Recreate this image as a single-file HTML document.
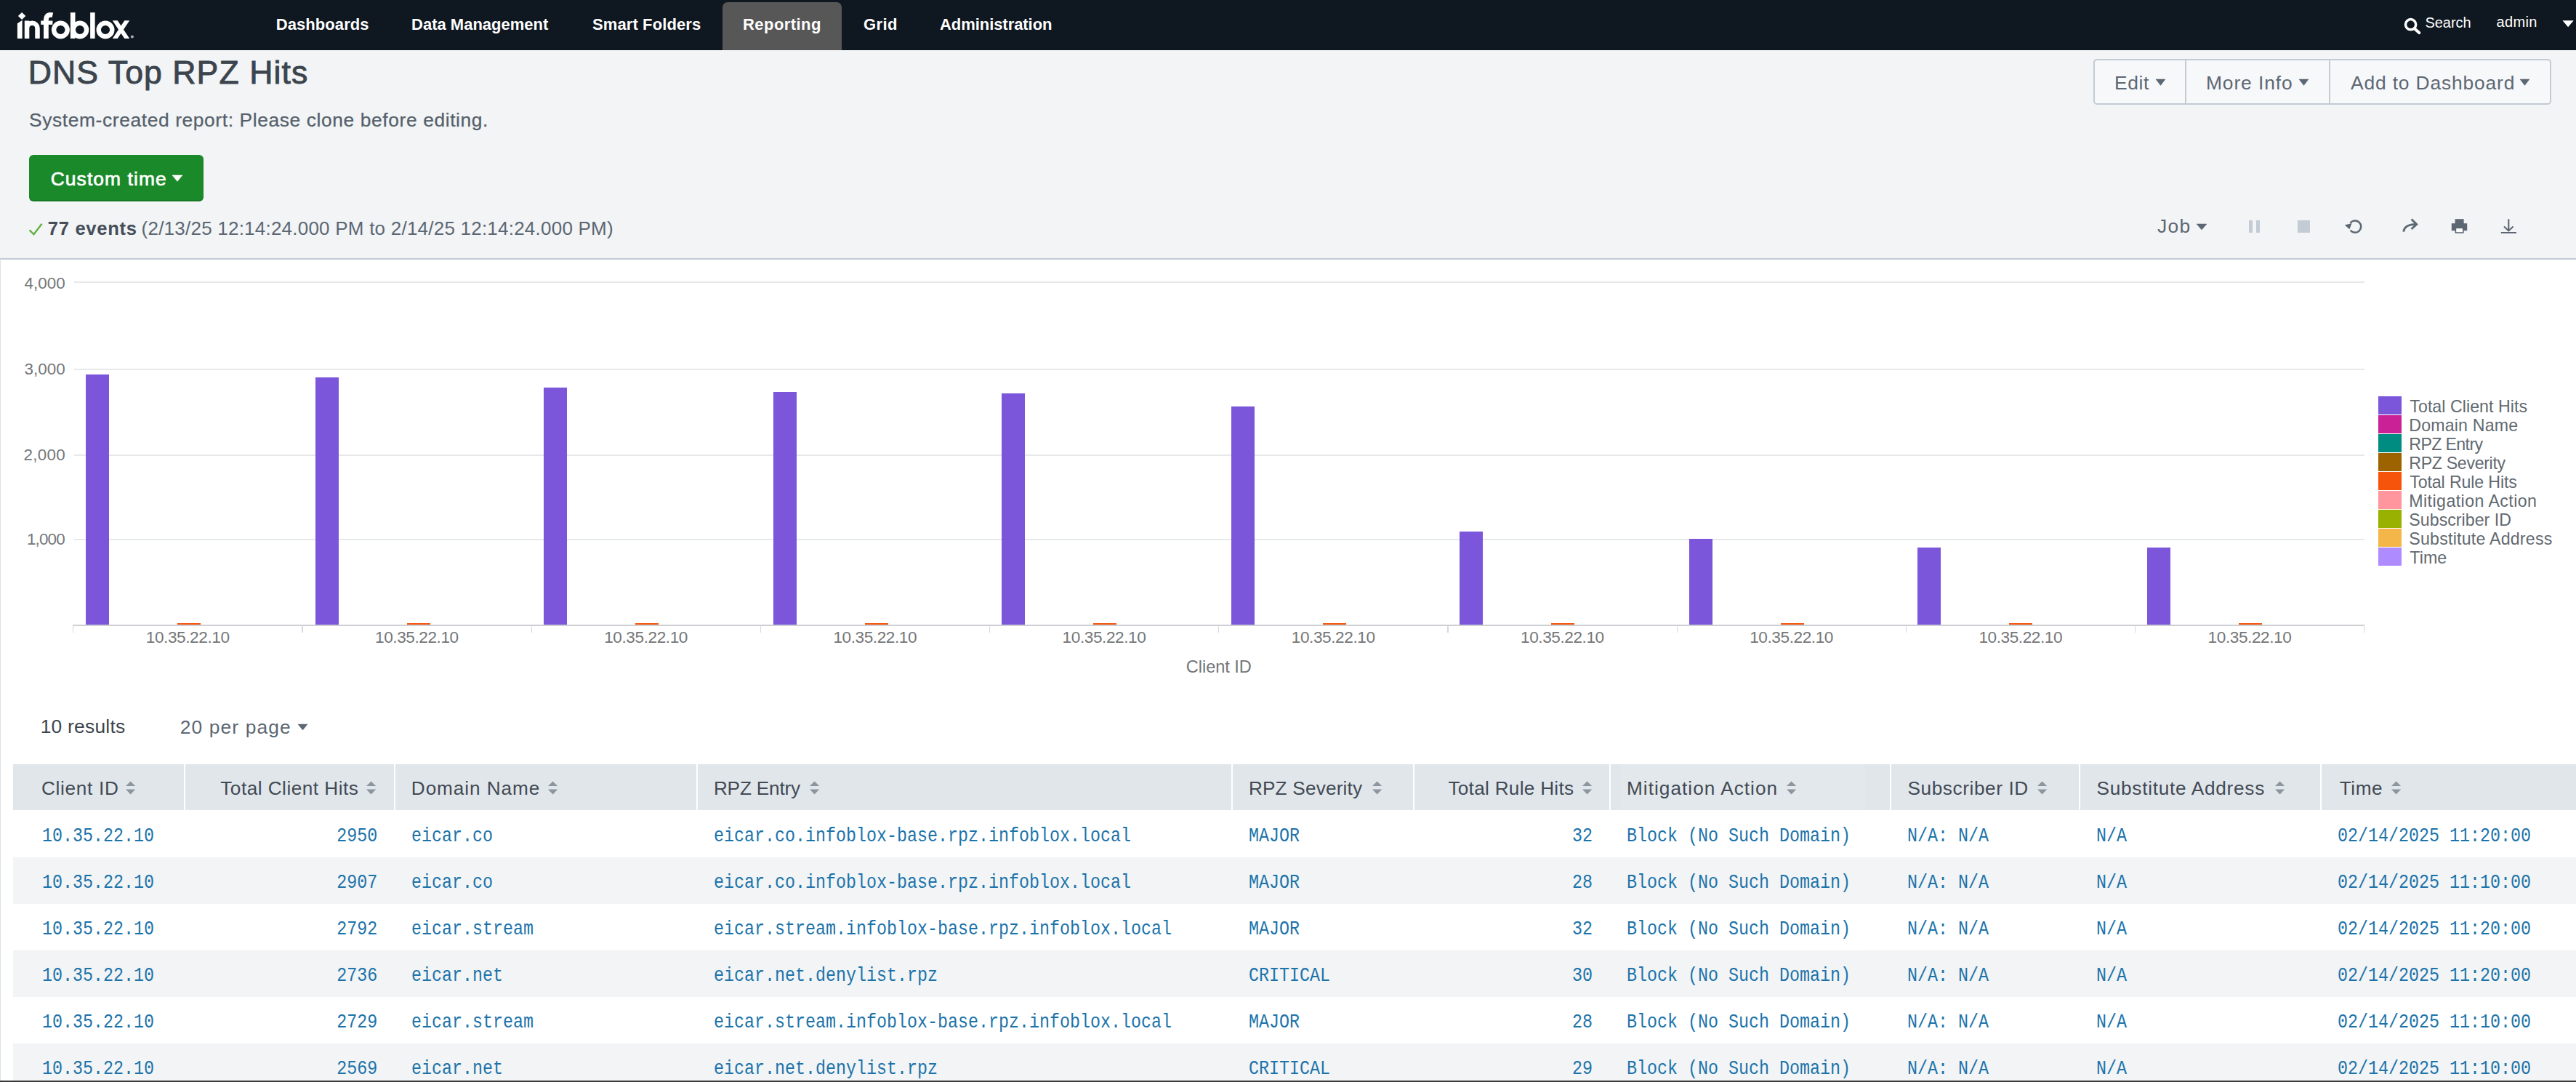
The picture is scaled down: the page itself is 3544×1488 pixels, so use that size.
<!DOCTYPE html>
<html><head><meta charset="utf-8"><title>DNS Top RPZ Hits</title>
<style>
html,body{margin:0;padding:0}
body{width:3544px;height:1488px;overflow:hidden;position:relative;background:#f2f4f5;font-family:"Liberation Sans",sans-serif}
.t{position:absolute;white-space:pre;line-height:1}
.a{position:absolute}
.m{position:absolute;white-space:pre;line-height:1;font-family:"Liberation Mono",monospace;font-size:27.6px;color:#1c73aa;transform:scaleX(.8454);transform-origin:0 0}
.m.r{transform-origin:100% 0}
svg{position:absolute;overflow:visible}
</style></head><body>

<div class="a" style="left:0;top:0;width:3544px;height:68.6px;background:#0f1720"></div>
<div class="a" style="left:994px;top:3px;width:164px;height:65.6px;background:#575757;border-radius:7px 7px 0 0"></div>
<svg style="left:0;top:0" width="210" height="68" viewBox="0 0 210 68" fill="none" stroke="#fff" stroke-width="6.6">
<polygon points="30.1,16.9 35.3,22 30.1,27.1 24.9,22" fill="#fff" stroke="none"/>
<polygon points="23.9,32.3 30.6,27.7 30.6,53 23.9,53" fill="#fff" stroke="none"/>
<path d="M37.05 53V28.4M37.05 38.9a7.225 7.225 0 0 1 14.45 0V53" stroke-width="6.5"/>
<path d="M72.4 20.8Q63.4 18.6 63.4 28V53" stroke-width="6.8"/><path d="M56.2 31.2H72.4" stroke-width="5.4"/>
<circle cx="83.4" cy="41" r="9.3" stroke-width="6.4"/>
<path d="M100.2 17.2V53"/><circle cx="109.9" cy="41" r="9.2" stroke-width="6.4"/>
<path d="M127.4 17.2V53" stroke-width="6.5"/>
<circle cx="145" cy="41" r="9.3" stroke-width="6.4"/>
<polygon points="154.8,28.2 161.7,28.2 178.2,53 171.3,53" fill="#fff" stroke="none"/><polygon points="171.3,28.2 178.2,28.2 161.7,53 154.8,53" fill="#fff" stroke="none"/>
<circle cx="181.9" cy="50.5" r="2.1" fill="#a9adb3" stroke="none"/>
</svg>
<svg style="left:3300px;top:18px" width="40" height="36" viewBox="3300 18 40 36"><circle cx="3316.6" cy="33.7" r="7.1" fill="none" stroke="#fff" stroke-width="3.5"/><path d="M3321.8 39.3L3328.2 45" stroke="#fff" stroke-width="4.2" stroke-linecap="round"/></svg>
<svg style="left:3520px;top:24px" width="24" height="18" viewBox="3520 24 24 18"><polygon points="3525.5,28.3 3540.7,28.3 3533.1,37.2" fill="#fff"/></svg>
<div class="a" style="left:2880.4px;top:81.3px;width:630px;height:62.8px;border:2px solid #c3cbd4;border-radius:5px;background:#f7f8fa;box-sizing:border-box"></div>
<div class="a" style="left:3006px;top:83.3px;width:2px;height:58.8px;background:#c3cbd4"></div>
<div class="a" style="left:3204px;top:83.3px;width:2px;height:58.8px;background:#c3cbd4"></div>
<svg style="left:2963.5px;top:106.8px" width="17.0" height="12.400000000000006" viewBox="2963.5 106.8 17.0 12.400000000000006"><polygon points="2965.5,108.8 2978.5,108.8 2972.0,117.2" fill="#5c6773" stroke="#5c6773" stroke-width=".5" stroke-linejoin="round"/></svg>
<svg style="left:3161px;top:106.8px" width="17" height="12.400000000000006" viewBox="3161 106.8 17 12.400000000000006"><polygon points="3163,108.8 3176,108.8 3169.5,117.2" fill="#5c6773" stroke="#5c6773" stroke-width=".5" stroke-linejoin="round"/></svg>
<svg style="left:3465.2px;top:106.8px" width="17.0" height="12.400000000000006" viewBox="3465.2 106.8 17.0 12.400000000000006"><polygon points="3467.2,108.8 3480.2,108.8 3473.7,117.2" fill="#5c6773" stroke="#5c6773" stroke-width=".5" stroke-linejoin="round"/></svg>
<div class="a" style="left:40px;top:213px;width:240px;height:64px;background:#1a8929;border-radius:6px;box-shadow:inset 0 -2px 0 rgba(0,0,0,.12)"></div>
<svg style="left:235px;top:239px" width="18" height="12.400000000000006" viewBox="235 239 18 12.400000000000006"><polygon points="237,241 251,241 244.0,249.4" fill="#fff" stroke="#fff" stroke-width=".5" stroke-linejoin="round"/></svg>
<svg style="left:36px;top:300px" width="30" height="30" viewBox="36 300 30 30"><path d="M40.6 316.4L46.5 322.2L57.6 307.8" fill="none" stroke="#62ad3d" stroke-width="2.3"/></svg>
<svg style="left:3019.5px;top:305.5px" width="18.0" height="12.0" viewBox="3019.5 305.5 18.0 12.0"><polygon points="3021.5,307.5 3035.5,307.5 3028.5,315.5" fill="#5c6773" stroke="#5c6773" stroke-width=".5" stroke-linejoin="round"/></svg>
<div class="a" style="left:3094px;top:303px;width:5px;height:17px;background:#c3cbd4"></div><div class="a" style="left:3104px;top:303px;width:5px;height:17px;background:#c3cbd4"></div>
<div class="a" style="left:3160.5px;top:303px;width:17.5px;height:17px;background:#c3cbd4"></div>
<svg style="left:3220px;top:296px" width="250" height="30" viewBox="3220 296 250 30" fill="none" stroke="#5c6773" stroke-width="2.5">
<path d="M3233.4 306.8A8.2 8.2 0 1 1 3233.6 316.8"/><polygon points="3225.8,309.6 3235.6,307 3232.4,315.2" fill="#5c6773" stroke="none"/>
<path d="M3306.8 318.6Q3308 308.6 3324.4 308.4" stroke-width="2.8"/><path d="M3317.6 301.6L3324.8 308.4L3317.6 315" stroke-width="2.8"/>
<rect x="3377.6" y="301.2" width="12" height="7" fill="#5c6773" stroke="none"/><rect x="3372.8" y="307.2" width="21.4" height="10" fill="#5c6773" stroke="none"/><rect x="3378.4" y="313.4" width="10.4" height="6.6" fill="#fff" stroke="#5c6773" stroke-width="1.6"/>
<path d="M3451.3 301.2V316.6M3445 311.4L3451.3 317.4L3457.6 311.4M3440.8 320H3462" stroke-width="2.1"/>
</svg>
<div class="a" style="left:0;top:356px;width:3544px;height:1132px;background:#fff"></div>
<div class="a" style="left:0;top:354.5px;width:3544px;height:2px;background:#c3cbd4"></div>
<div class="a" style="left:0;top:356px;width:1px;height:1132px;background:#dde2e7"></div>
<div class="a" style="left:102px;top:386.85px;width:3150.5px;height:2px;background:#e6e8ea"></div>
<div class="a" style="left:102px;top:507.20px;width:3150.5px;height:2px;background:#e6e8ea"></div>
<div class="a" style="left:102px;top:624.90px;width:3150.5px;height:2px;background:#e6e8ea"></div>
<div class="a" style="left:102px;top:740.80px;width:3150.5px;height:2px;background:#e6e8ea"></div>
<div class="a" style="left:100px;top:858.8px;width:3152.5px;height:1.8px;background:#cdcfd2"></div>
<div class="a" style="left:100.25px;top:860px;width:1.2px;height:10px;background:#d6d8da"></div>
<div class="a" style="left:415.45px;top:860px;width:1.2px;height:10px;background:#d6d8da"></div>
<div class="a" style="left:730.65px;top:860px;width:1.2px;height:10px;background:#d6d8da"></div>
<div class="a" style="left:1045.85px;top:860px;width:1.2px;height:10px;background:#d6d8da"></div>
<div class="a" style="left:1361.05px;top:860px;width:1.2px;height:10px;background:#d6d8da"></div>
<div class="a" style="left:1676.25px;top:860px;width:1.2px;height:10px;background:#d6d8da"></div>
<div class="a" style="left:1991.45px;top:860px;width:1.2px;height:10px;background:#d6d8da"></div>
<div class="a" style="left:2306.65px;top:860px;width:1.2px;height:10px;background:#d6d8da"></div>
<div class="a" style="left:2621.85px;top:860px;width:1.2px;height:10px;background:#d6d8da"></div>
<div class="a" style="left:2937.05px;top:860px;width:1.2px;height:10px;background:#d6d8da"></div>
<div class="a" style="left:3252.25px;top:860px;width:1.2px;height:10px;background:#d6d8da"></div>
<div class="a" style="left:118.0px;top:515.0px;width:32px;height:344.0px;background:#7b56db"></div>
<div class="a" style="left:244.0px;top:856.8px;width:32px;height:2.2px;background:#f6540b"></div>
<div class="a" style="left:434.2px;top:519.0px;width:32px;height:340.0px;background:#7b56db"></div>
<div class="a" style="left:560.2px;top:856.8px;width:32px;height:2.2px;background:#f6540b"></div>
<div class="a" style="left:747.8px;top:532.7px;width:32px;height:326.3px;background:#7b56db"></div>
<div class="a" style="left:873.8px;top:856.8px;width:32px;height:2.2px;background:#f6540b"></div>
<div class="a" style="left:1063.8px;top:539.1px;width:32px;height:319.9px;background:#7b56db"></div>
<div class="a" style="left:1189.8px;top:856.8px;width:32px;height:2.2px;background:#f6540b"></div>
<div class="a" style="left:1378.0px;top:540.8px;width:32px;height:318.2px;background:#7b56db"></div>
<div class="a" style="left:1504.0px;top:856.8px;width:32px;height:2.2px;background:#f6540b"></div>
<div class="a" style="left:1694.0px;top:558.7px;width:32px;height:300.3px;background:#7b56db"></div>
<div class="a" style="left:1820.0px;top:856.8px;width:32px;height:2.2px;background:#f6540b"></div>
<div class="a" style="left:2008.0px;top:730.7px;width:32px;height:128.3px;background:#7b56db"></div>
<div class="a" style="left:2134.0px;top:856.8px;width:32px;height:2.2px;background:#f6540b"></div>
<div class="a" style="left:2324.0px;top:741.0px;width:32px;height:118.0px;background:#7b56db"></div>
<div class="a" style="left:2450.0px;top:856.8px;width:32px;height:2.2px;background:#f6540b"></div>
<div class="a" style="left:2637.9px;top:753.0px;width:32px;height:106.0px;background:#7b56db"></div>
<div class="a" style="left:2763.9px;top:856.8px;width:32px;height:2.2px;background:#f6540b"></div>
<div class="a" style="left:2953.8px;top:753.0px;width:32px;height:106.0px;background:#7b56db"></div>
<div class="a" style="left:3079.8px;top:856.8px;width:32px;height:2.2px;background:#f6540b"></div>
<div class="a" style="left:3272px;top:545px;width:32px;height:24.5px;background:#7b56db"></div>
<div class="a" style="left:3272px;top:571px;width:32px;height:24.5px;background:#cb2196"></div>
<div class="a" style="left:3272px;top:597px;width:32px;height:24.5px;background:#008c80"></div>
<div class="a" style="left:3272px;top:623px;width:32px;height:24.5px;background:#9d6300"></div>
<div class="a" style="left:3272px;top:649px;width:32px;height:24.5px;background:#f6540b"></div>
<div class="a" style="left:3272px;top:675px;width:32px;height:24.5px;background:#ff969e"></div>
<div class="a" style="left:3272px;top:701px;width:32px;height:24.5px;background:#99b100"></div>
<div class="a" style="left:3272px;top:727px;width:32px;height:24.5px;background:#f4b649"></div>
<div class="a" style="left:3272px;top:753px;width:32px;height:24.5px;background:#ae8cff"></div>
<svg style="left:407.5px;top:993.6px" width="17.0" height="12.0" viewBox="407.5 993.6 17.0 12.0"><polygon points="409.5,995.6 422.5,995.6 416.0,1003.6" fill="#5c6773" stroke="#5c6773" stroke-width=".5" stroke-linejoin="round"/></svg>
<div class="a" style="left:18px;top:1051.3px;width:3526px;height:63.2px;background:#e1e6eb"></div>
<div class="a" style="left:253.4px;top:1051.3px;width:2px;height:63.2px;background:#fff"></div>
<div class="a" style="left:541.6px;top:1051.3px;width:2px;height:63.2px;background:#fff"></div>
<div class="a" style="left:957.7px;top:1051.3px;width:2px;height:63.2px;background:#fff"></div>
<div class="a" style="left:1693.7px;top:1051.3px;width:2px;height:63.2px;background:#fff"></div>
<div class="a" style="left:1944.0px;top:1051.3px;width:2px;height:63.2px;background:#fff"></div>
<div class="a" style="left:2213.8px;top:1051.3px;width:2px;height:63.2px;background:#fff"></div>
<div class="a" style="left:2600.0px;top:1051.3px;width:2px;height:63.2px;background:#fff"></div>
<div class="a" style="left:2860.0px;top:1051.3px;width:2px;height:63.2px;background:#fff"></div>
<div class="a" style="left:3192.0px;top:1051.3px;width:2px;height:63.2px;background:#fff"></div>
<div class="a" style="left:18px;top:1178.5px;width:3526px;height:64px;background:#f2f4f5"></div>
<div class="a" style="left:18px;top:1306.5px;width:3526px;height:64px;background:#f2f4f5"></div>
<div class="a" style="left:18px;top:1434.5px;width:3526px;height:64px;background:#f2f4f5"></div>
<div class="a" style="left:2230px;top:1051.3px;width:336px;height:437px;background:rgba(255,255,255,.08)"></div>
<svg style="left:171.6px;top:1072px" width="18" height="24" viewBox="171.6 1072 18 24"><polygon points="172.6,1081 185.79999999999998,1081 179.2,1074.6" fill="#8d959e"/><polygon points="172.6,1085.6 185.79999999999998,1085.6 179.2,1092.6" fill="#8d959e"/></svg>
<svg style="left:503.40000000000003px;top:1072px" width="18" height="24" viewBox="503.40000000000003 1072 18 24"><polygon points="504.40000000000003,1081 517.6,1081 511.00000000000006,1074.6" fill="#8d959e"/><polygon points="504.40000000000003,1085.6 517.6,1085.6 511.00000000000006,1092.6" fill="#8d959e"/></svg>
<svg style="left:752.6px;top:1072px" width="18" height="24" viewBox="752.6 1072 18 24"><polygon points="753.6,1081 766.8000000000001,1081 760.2,1074.6" fill="#8d959e"/><polygon points="753.6,1085.6 766.8000000000001,1085.6 760.2,1092.6" fill="#8d959e"/></svg>
<svg style="left:1113.3999999999999px;top:1072px" width="18" height="24" viewBox="1113.3999999999999 1072 18 24"><polygon points="1114.3999999999999,1081 1127.6,1081 1120.9999999999998,1074.6" fill="#8d959e"/><polygon points="1114.3999999999999,1085.6 1127.6,1085.6 1120.9999999999998,1092.6" fill="#8d959e"/></svg>
<svg style="left:1887.1999999999998px;top:1072px" width="18" height="24" viewBox="1887.1999999999998 1072 18 24"><polygon points="1888.1999999999998,1081 1901.3999999999999,1081 1894.7999999999997,1074.6" fill="#8d959e"/><polygon points="1888.1999999999998,1085.6 1901.3999999999999,1085.6 1894.7999999999997,1092.6" fill="#8d959e"/></svg>
<svg style="left:2176.4px;top:1072px" width="18" height="24" viewBox="2176.4 1072 18 24"><polygon points="2177.4,1081 2190.6,1081 2184.0,1074.6" fill="#8d959e"/><polygon points="2177.4,1085.6 2190.6,1085.6 2184.0,1092.6" fill="#8d959e"/></svg>
<svg style="left:2456.6px;top:1072px" width="18" height="24" viewBox="2456.6 1072 18 24"><polygon points="2457.6,1081 2470.7999999999997,1081 2464.2,1074.6" fill="#8d959e"/><polygon points="2457.6,1085.6 2470.7999999999997,1085.6 2464.2,1092.6" fill="#8d959e"/></svg>
<svg style="left:2801.6px;top:1072px" width="18" height="24" viewBox="2801.6 1072 18 24"><polygon points="2802.6,1081 2815.7999999999997,1081 2809.2,1074.6" fill="#8d959e"/><polygon points="2802.6,1085.6 2815.7999999999997,1085.6 2809.2,1092.6" fill="#8d959e"/></svg>
<svg style="left:3129.2px;top:1072px" width="18" height="24" viewBox="3129.2 1072 18 24"><polygon points="3130.2,1081 3143.3999999999996,1081 3136.7999999999997,1074.6" fill="#8d959e"/><polygon points="3130.2,1085.6 3143.3999999999996,1085.6 3136.7999999999997,1092.6" fill="#8d959e"/></svg>
<svg style="left:3288.6px;top:1072px" width="18" height="24" viewBox="3288.6 1072 18 24"><polygon points="3289.6,1081 3302.7999999999997,1081 3296.2,1074.6" fill="#8d959e"/><polygon points="3289.6,1085.6 3302.7999999999997,1085.6 3296.2,1092.6" fill="#8d959e"/></svg>
<div class="a" style="left:0;top:1485.5px;width:3544px;height:2.5px;background:#3a3a3a"></div>
<span class="t" style="left:379.70px;top:23.00px;font-size:22px;font-weight:700;color:#fff;letter-spacing:0.077px;">Dashboards</span>
<span class="t" style="left:566.00px;top:23.00px;font-size:22px;font-weight:700;color:#fff;letter-spacing:0.004px;">Data Management</span>
<span class="t" style="left:815.00px;top:23.00px;font-size:22px;font-weight:700;color:#fff;letter-spacing:0.109px;">Smart Folders</span>
<span class="t" style="left:1022.00px;top:23.00px;font-size:22px;font-weight:700;color:#fff;letter-spacing:0.445px;">Reporting</span>
<span class="t" style="left:1188.00px;top:23.00px;font-size:22px;font-weight:700;color:#fff;letter-spacing:0.405px;">Grid</span>
<span class="t" style="left:1293.00px;top:23.00px;font-size:22px;font-weight:700;color:#fff;letter-spacing:-0.060px;">Administration</span>
<span class="t" style="left:3336.40px;top:21.00px;font-size:20px;color:#fff;letter-spacing:-0.029px;">Search</span>
<span class="t" style="left:3434.50px;top:19.60px;font-size:20px;color:#fff;letter-spacing:0.338px;">admin</span>
<span class="t" style="left:38.80px;top:77.60px;font-size:44.6px;color:#3c444d;letter-spacing:1.066px;-webkit-text-stroke:.9px #3c444d;">DNS Top RPZ Hits</span>
<span class="t" style="left:40.00px;top:152.20px;font-size:26.4px;color:#55606b;letter-spacing:0.600px;-webkit-text-stroke:.25px #55606b;">System-created report: Please clone before editing.</span>
<span class="t" style="left:69.70px;top:232.80px;font-size:26.4px;color:#fff;letter-spacing:1.086px;-webkit-text-stroke:.7px #fff;">Custom time</span>
<span class="t" style="left:65.80px;top:302.00px;font-size:25.6px;font-weight:700;color:#454e59;letter-spacing:0.683px;">77 events</span>
<span class="t" style="left:194.60px;top:301.00px;font-size:26px;color:#5c6773;letter-spacing:0.227px;">(2/13/25 12:14:24.000 PM to 2/14/25 12:14:24.000 PM)</span>
<span class="t" style="left:2909.00px;top:100.80px;font-size:26.4px;color:#5c6773;letter-spacing:0.619px;">Edit</span>
<span class="t" style="left:3034.90px;top:100.80px;font-size:26.4px;color:#5c6773;letter-spacing:0.912px;">More Info</span>
<span class="t" style="left:3234.00px;top:100.80px;font-size:26.4px;color:#5c6773;letter-spacing:0.843px;">Add to Dashboard</span>
<span class="t" style="left:2968.00px;top:298.00px;font-size:26.4px;color:#5c6773;letter-spacing:1.314px;">Job</span>
<span class="t" style="left:33.50px;top:378.60px;font-size:22.4px;color:#747678;letter-spacing:0.030px;">4,000</span>
<span class="t" style="left:33.50px;top:496.60px;font-size:22.4px;color:#747678;letter-spacing:0.030px;">3,000</span>
<span class="t" style="left:32.60px;top:614.80px;font-size:22.4px;color:#747678;letter-spacing:0.255px;">2,000</span>
<span class="t" style="left:36.90px;top:730.90px;font-size:22.4px;color:#747678;letter-spacing:-0.820px;">1,000</span>
<span class="t" style="left:200.80px;top:866.40px;font-size:22.6px;color:#747678;letter-spacing:-0.419px;">10.35.22.10</span>
<span class="t" style="left:516.00px;top:866.40px;font-size:22.6px;color:#747678;letter-spacing:-0.419px;">10.35.22.10</span>
<span class="t" style="left:831.20px;top:866.40px;font-size:22.6px;color:#747678;letter-spacing:-0.419px;">10.35.22.10</span>
<span class="t" style="left:1146.40px;top:866.40px;font-size:22.6px;color:#747678;letter-spacing:-0.419px;">10.35.22.10</span>
<span class="t" style="left:1461.60px;top:866.40px;font-size:22.6px;color:#747678;letter-spacing:-0.419px;">10.35.22.10</span>
<span class="t" style="left:1776.80px;top:866.40px;font-size:22.6px;color:#747678;letter-spacing:-0.419px;">10.35.22.10</span>
<span class="t" style="left:2092.00px;top:866.40px;font-size:22.6px;color:#747678;letter-spacing:-0.419px;">10.35.22.10</span>
<span class="t" style="left:2407.20px;top:866.40px;font-size:22.6px;color:#747678;letter-spacing:-0.419px;">10.35.22.10</span>
<span class="t" style="left:2722.40px;top:866.40px;font-size:22.6px;color:#747678;letter-spacing:-0.419px;">10.35.22.10</span>
<span class="t" style="left:3037.60px;top:866.40px;font-size:22.6px;color:#747678;letter-spacing:-0.419px;">10.35.22.10</span>
<span class="t" style="left:1631.80px;top:906.30px;font-size:23.6px;color:#747678;letter-spacing:-0.054px;">Client ID</span>
<span class="t" style="left:3315.30px;top:548.20px;font-size:23.2px;color:#626970;letter-spacing:0.045px;">Total Client Hits</span>
<span class="t" style="left:3314.30px;top:574.20px;font-size:23.2px;color:#626970;letter-spacing:0.160px;">Domain Name</span>
<span class="t" style="left:3314.30px;top:600.20px;font-size:23.2px;color:#626970;letter-spacing:-0.643px;">RPZ Entry</span>
<span class="t" style="left:3314.30px;top:626.20px;font-size:23.2px;color:#626970;letter-spacing:-0.344px;">RPZ Severity</span>
<span class="t" style="left:3315.30px;top:652.20px;font-size:23.2px;color:#626970;letter-spacing:-0.135px;">Total Rule Hits</span>
<span class="t" style="left:3314.30px;top:678.20px;font-size:23.2px;color:#626970;letter-spacing:0.429px;">Mitigation Action</span>
<span class="t" style="left:3314.30px;top:704.20px;font-size:23.2px;color:#626970;letter-spacing:0.024px;">Subscriber ID</span>
<span class="t" style="left:3314.30px;top:730.20px;font-size:23.2px;color:#626970;letter-spacing:0.216px;">Substitute Address</span>
<span class="t" style="left:3315.30px;top:756.20px;font-size:23.2px;color:#626970;letter-spacing:0.077px;">Time</span>
<span class="t" style="left:55.70px;top:985.50px;font-size:26.4px;color:#3c444d;letter-spacing:0.231px;">10 results</span>
<span class="t" style="left:247.80px;top:986.60px;font-size:26.4px;color:#5c6773;letter-spacing:1.101px;">20 per page</span>
<span class="t" style="left:56.90px;top:1070.70px;font-size:26.2px;color:#414a54;letter-spacing:0.687px;">Client ID</span>
<span class="t" style="left:303.30px;top:1070.70px;font-size:26.2px;color:#414a54;letter-spacing:0.474px;">Total Client Hits</span>
<span class="t" style="left:565.80px;top:1070.70px;font-size:26.2px;color:#414a54;letter-spacing:0.920px;">Domain Name</span>
<span class="t" style="left:981.90px;top:1070.70px;font-size:26.2px;color:#414a54;letter-spacing:-0.197px;">RPZ Entry</span>
<span class="t" style="left:1717.90px;top:1070.70px;font-size:26.2px;color:#414a54;letter-spacing:0.177px;">RPZ Severity</span>
<span class="t" style="left:1992.40px;top:1070.70px;font-size:26.2px;color:#414a54;letter-spacing:0.276px;">Total Rule Hits</span>
<span class="t" style="left:2238.00px;top:1070.70px;font-size:26.2px;color:#414a54;letter-spacing:1.027px;">Mitigation Action</span>
<span class="t" style="left:2624.50px;top:1070.70px;font-size:26.2px;color:#414a54;letter-spacing:0.590px;">Subscriber ID</span>
<span class="t" style="left:2884.60px;top:1070.70px;font-size:26.2px;color:#414a54;letter-spacing:0.723px;">Substitute Address</span>
<span class="t" style="left:3218.70px;top:1070.70px;font-size:26.2px;color:#414a54;letter-spacing:0.548px;">Time</span>
<span class="m" style="left:57.5px;top:1135.5px">10.35.22.10</span>
<span class="m r" style="right:3025.0px;top:1135.5px">2950</span>
<span class="m" style="left:565.8px;top:1135.5px">eicar.co</span>
<span class="m" style="left:981.6px;top:1135.5px">eicar.co.infoblox-base.rpz.infoblox.local</span>
<span class="m" style="left:1717.8px;top:1135.5px">MAJOR</span>
<span class="m r" style="right:1353.2px;top:1135.5px">32</span>
<span class="m" style="left:2237.8px;top:1135.5px">Block (No Such Domain)</span>
<span class="m" style="left:2623.5px;top:1135.5px">N/A: N/A</span>
<span class="m" style="left:2883.6px;top:1135.5px">N/A</span>
<span class="m" style="left:3216.3px;top:1135.5px">02/14/2025 11:20:00</span>
<span class="m" style="left:57.5px;top:1199.5px">10.35.22.10</span>
<span class="m r" style="right:3025.0px;top:1199.5px">2907</span>
<span class="m" style="left:565.8px;top:1199.5px">eicar.co</span>
<span class="m" style="left:981.6px;top:1199.5px">eicar.co.infoblox-base.rpz.infoblox.local</span>
<span class="m" style="left:1717.8px;top:1199.5px">MAJOR</span>
<span class="m r" style="right:1353.2px;top:1199.5px">28</span>
<span class="m" style="left:2237.8px;top:1199.5px">Block (No Such Domain)</span>
<span class="m" style="left:2623.5px;top:1199.5px">N/A: N/A</span>
<span class="m" style="left:2883.6px;top:1199.5px">N/A</span>
<span class="m" style="left:3216.3px;top:1199.5px">02/14/2025 11:10:00</span>
<span class="m" style="left:57.5px;top:1263.5px">10.35.22.10</span>
<span class="m r" style="right:3025.0px;top:1263.5px">2792</span>
<span class="m" style="left:565.8px;top:1263.5px">eicar.stream</span>
<span class="m" style="left:981.6px;top:1263.5px">eicar.stream.infoblox-base.rpz.infoblox.local</span>
<span class="m" style="left:1717.8px;top:1263.5px">MAJOR</span>
<span class="m r" style="right:1353.2px;top:1263.5px">32</span>
<span class="m" style="left:2237.8px;top:1263.5px">Block (No Such Domain)</span>
<span class="m" style="left:2623.5px;top:1263.5px">N/A: N/A</span>
<span class="m" style="left:2883.6px;top:1263.5px">N/A</span>
<span class="m" style="left:3216.3px;top:1263.5px">02/14/2025 11:20:00</span>
<span class="m" style="left:57.5px;top:1327.5px">10.35.22.10</span>
<span class="m r" style="right:3025.0px;top:1327.5px">2736</span>
<span class="m" style="left:565.8px;top:1327.5px">eicar.net</span>
<span class="m" style="left:981.6px;top:1327.5px">eicar.net.denylist.rpz</span>
<span class="m" style="left:1717.8px;top:1327.5px">CRITICAL</span>
<span class="m r" style="right:1353.2px;top:1327.5px">30</span>
<span class="m" style="left:2237.8px;top:1327.5px">Block (No Such Domain)</span>
<span class="m" style="left:2623.5px;top:1327.5px">N/A: N/A</span>
<span class="m" style="left:2883.6px;top:1327.5px">N/A</span>
<span class="m" style="left:3216.3px;top:1327.5px">02/14/2025 11:20:00</span>
<span class="m" style="left:57.5px;top:1391.5px">10.35.22.10</span>
<span class="m r" style="right:3025.0px;top:1391.5px">2729</span>
<span class="m" style="left:565.8px;top:1391.5px">eicar.stream</span>
<span class="m" style="left:981.6px;top:1391.5px">eicar.stream.infoblox-base.rpz.infoblox.local</span>
<span class="m" style="left:1717.8px;top:1391.5px">MAJOR</span>
<span class="m r" style="right:1353.2px;top:1391.5px">28</span>
<span class="m" style="left:2237.8px;top:1391.5px">Block (No Such Domain)</span>
<span class="m" style="left:2623.5px;top:1391.5px">N/A: N/A</span>
<span class="m" style="left:2883.6px;top:1391.5px">N/A</span>
<span class="m" style="left:3216.3px;top:1391.5px">02/14/2025 11:10:00</span>
<span class="m" style="left:57.5px;top:1455.5px">10.35.22.10</span>
<span class="m r" style="right:3025.0px;top:1455.5px">2569</span>
<span class="m" style="left:565.8px;top:1455.5px">eicar.net</span>
<span class="m" style="left:981.6px;top:1455.5px">eicar.net.denylist.rpz</span>
<span class="m" style="left:1717.8px;top:1455.5px">CRITICAL</span>
<span class="m r" style="right:1353.2px;top:1455.5px">29</span>
<span class="m" style="left:2237.8px;top:1455.5px">Block (No Such Domain)</span>
<span class="m" style="left:2623.5px;top:1455.5px">N/A: N/A</span>
<span class="m" style="left:2883.6px;top:1455.5px">N/A</span>
<span class="m" style="left:3216.3px;top:1455.5px">02/14/2025 11:10:00</span>
</body></html>
